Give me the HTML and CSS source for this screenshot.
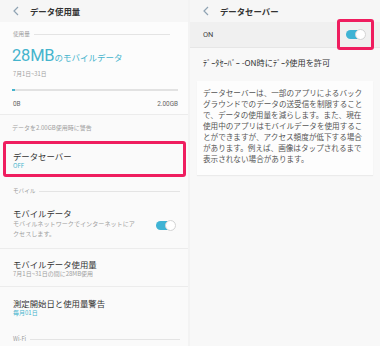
FILE: index.html
```html
<!DOCTYPE html>
<html lang="ja">
<head>
  <meta charset="UTF-8">
  <meta name="viewport" content="width=device-width, initial-scale=1.0">
  <title>データセーバー</title>
  <link rel="stylesheet" href="styles.css">
</head>
<body>
  <div class="screens">
    <div class="screen screen-left">
      <header class="appbar">
        <svg class="back" viewBox="0 0 6 10" width="6" height="10"><path d="M5 1 L1 5 L5 9" fill="none" stroke="#8fa3b3" stroke-width="1.2"/></svg>
        <h1>データ使用量</h1>
      </header>

      <section class="usage">
        <div class="label"><span>使用量</span></div>
        <div class="amount"><span class="big">28MB</span>のモバイルデータ</div>
        <div class="period">7月1日~31日</div>
        <div class="meter"><span class="meter-fill" style="width: 2%;"></span></div>
        <div class="meter-scale"><span>0B</span><span>2.00GB</span></div>
      </section>

      <div class="note">データを2.00GB使用時に警告</div>

      <div class="item highlight">
        <div class="item-title">データセーバー</div>
        <div class="item-sub accent">OFF</div>
      </div>

      <div class="label label-mobile"><span>モバイル</span></div>

      <div class="item item-switch">
        <div class="item-text">
          <div class="item-title">モバイルデータ</div>
          <div class="item-sub">モバイルネットワークでインターネットにア<br>クセスします。</div>
        </div>
        <span class="toggle on"></span>
      </div>

      <div class="item item-usage">
        <div class="item-title">モバイルデータ使用量</div>
        <div class="item-sub">7月1日~31日の間に28MB使用</div>
      </div>

      <div class="item item-cycle">
        <div class="item-title">測定開始日と使用量警告</div>
        <div class="item-sub accent">毎月01日</div>
      </div>

      <div class="label label-wifi"><span>Wi-Fi</span></div>
    </div>

    <div class="screen screen-right">
      <header class="appbar">
        <svg class="back" viewBox="0 0 6 10" width="6" height="10"><path d="M5 1 L1 5 L5 9" fill="none" stroke="#8fa3b3" stroke-width="1.2"/></svg>
        <h1>データセーバー</h1>
      </header>

      <div class="master-row">
        <span>ON</span>
        <span class="toggle on marked"></span>
      </div>

      <div class="allow-row">ﾃﾞｰﾀｾｰﾊﾞｰ -ON時にﾃﾞｰﾀ使用を許可</div>

      <div class="info-card">
        データセーバーは、一部のアプリによるバック<br>
        グラウンドでのデータの送受信を制限すること<br>
        で、データの使用量を減らします。また、現在<br>
        使用中のアプリはモバイルデータを使用するこ<br>
        とができますが、アクセス頻度が低下する場合<br>
        があります。例えば、画像はタップされるまで<br>
        表示されない場合があります。
      </div>
    </div>
  </div>
</body>
</html>
```

FILE: styles.css
```css
body {
  margin: 0;
  width: 380px;
  height: 346px;
  overflow: hidden;
  background: #f3f3f3;
  font-family: "Noto Sans CJK JP", "Noto Sans", sans-serif;
  color: #333;
}
.screens {
  display: flex;
  gap: 2px;
  height: 346px;
}
.screen {
  background: #f7f7f7;
  overflow: hidden;
}
.screen-left {
  width: 188px;
  background: #fafafa;
}
.screen-right {
  flex: 1;
  background: #f8f8f8;
}

.appbar {
  height: 22px;
  display: flex;
  align-items: center;
  padding-left: 13px;
  background: #f6f6f6;
}
.appbar .back {
  margin-right: 11px;
}
.appbar h1 {
  margin: 0;
  font-size: 8.4px;
  font-weight: 700;
  color: #333;
}

.label {
  display: flex;
  align-items: center;
  height: 8px;
  padding: 0 8px 0 13px;
  font-size: 5.6px;
  color: #9a9a9a;
}
.label::after {
  content: "";
  flex: 1;
  height: 1px;
  margin-left: 4px;
  background: #e4e4e4;
}

.usage {
  padding: 8px 10px 6px 0;
  background: #fcfcfc;
}
.amount {
  margin-top: 8px;
  padding-left: 12px;
  line-height: 20px;
  font-size: 8.5px;
  color: #45b4cd;
}
.amount .big {
  font-family: Roboto, sans-serif;
  font-size: 16.5px;
  letter-spacing: -0.2px;
}
.period {
  margin-top: 3px;
  padding-left: 13px;
  line-height: 8px;
  font-size: 5.8px;
  color: #a0a0a0;
}
.meter {
  margin: 11px 0 0 12px;
  height: 2px;
  background: #e2e2e2;
}
.meter-fill {
  display: block;
  height: 2px;
  background: #45b4cd;
}
.meter-scale {
  display: flex;
  justify-content: space-between;
  margin-top: 9px;
  padding-left: 13px;
  line-height: 8px;
  font-family: Roboto, sans-serif;
  font-size: 6.4px;
  color: #666;
}

.note {
  height: 25px;
  line-height: 25px;
  padding-left: 12px;
  border-top: 1px solid #ececec;
  font-size: 6px;
  color: #a0a0a0;
}

.item {
  padding: 0 13px;
}
.item-title {
  line-height: 12px;
  font-size: 8.4px;
  color: #333;
}
.item-sub {
  line-height: 8px;
  font-size: 6px;
  color: #a0a0a0;
}
.accent {
  color: #45b4cd;
}

.highlight {
  margin: 1px 2px 0 3px;
  padding: 6px 7px 4px;
  border: 3px solid #ef1d5f;
  border-radius: 3px;
}

.label-mobile {
  margin-top: 10px;
}

.item-switch {
  display: flex;
  align-items: center;
  padding-top: 12px;
  padding-bottom: 9px;
  border-bottom: 1px solid #ececec;
}
.item-switch .item-text {
  flex: 1;
}
.item-switch .item-sub {
  line-height: 10px;
  font-size: 6.1px;
}
.item-usage {
  padding-top: 9px;
  padding-bottom: 8px;
  border-bottom: 1px solid #ececec;
}
.item-cycle {
  padding-top: 10px;
  padding-bottom: 7px;
}
.label-wifi {
  margin-top: 11px;
}

.toggle {
  position: relative;
  width: 19px;
  height: 9px;
  border-radius: 5px;
  background: #ccc;
}
.toggle.on {
  background: #3fb3d4;
}
.toggle::after {
  content: "";
  position: absolute;
  top: -1px;
  right: -1px;
  width: 9px;
  height: 9px;
  border-radius: 50%;
  background: #fff;
  border: 1px solid #d4d4d4;
}
.item-switch .toggle {
  margin-top: 4px;
}
.toggle.marked::before {
  content: "";
  position: absolute;
  left: -9px;
  top: -11px;
  width: 31px;
  height: 25px;
  border: 3px solid #ef1d5f;
  border-radius: 3px;
}

.master-row {
  display: flex;
  justify-content: space-between;
  align-items: center;
  height: 25px;
  padding: 0 15px 0 13px;
  background: #f0f0f0;
  border-bottom: 1px solid #e6e6e6;
  font-family: Roboto, sans-serif;
  font-size: 7.4px;
  color: #444;
}
.allow-row {
  height: 29px;
  line-height: 29px;
  padding-left: 13px;
  font-size: 8.2px;
  color: #333;
}
.info-card {
  margin: 4px 7px 0;
  padding: 6px 4px 11px 6px;
  background: #fdfdfd;
  box-shadow: 0 1px 1px rgba(0, 0, 0, 0.05);
  line-height: 11px;
  font-size: 7.6px;
  color: #555;
  white-space: nowrap;
}
```
